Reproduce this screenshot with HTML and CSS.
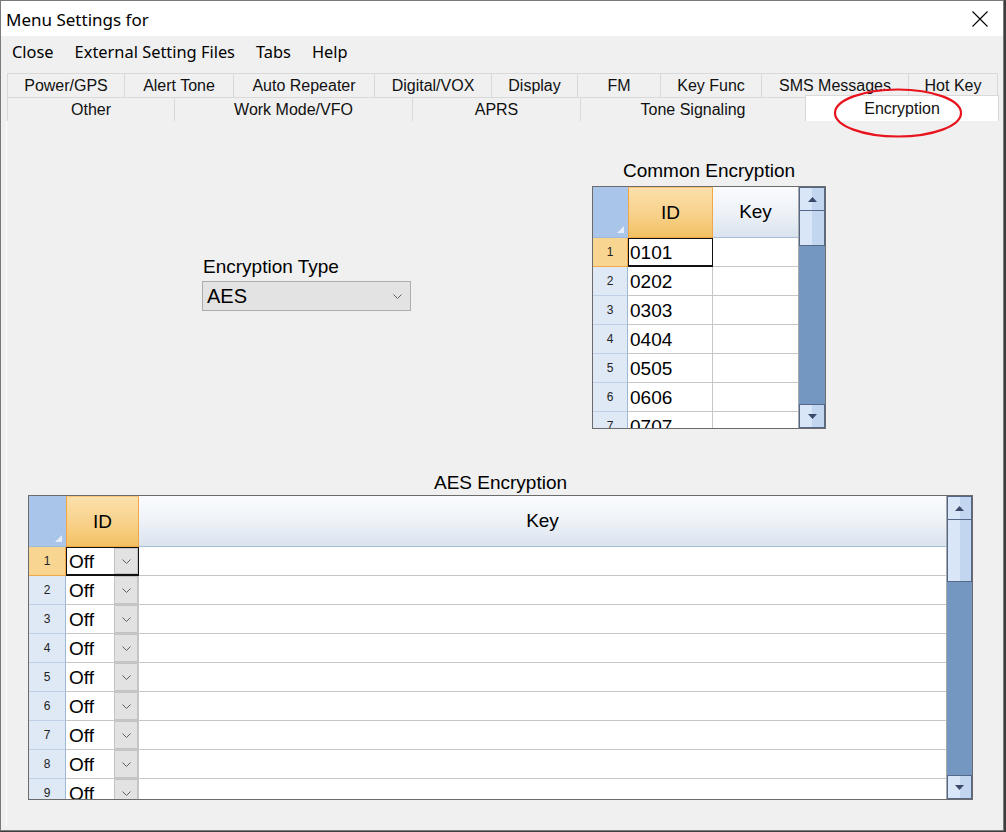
FILE: index.html
```html
<!DOCTYPE html>
<html>
<head>
<meta charset="utf-8">
<title>Menu Settings</title>
<link rel="stylesheet" href="styles.css">
</head>
<body>
<div class="window">
  <div class="titlebar">
    <span class="title">Menu Settings for</span>
    <svg class="close-x" width="16" height="16" viewBox="0 0 16 16"><path d="M0.5 0.5L15.5 15.5M15.5 0.5L0.5 15.5" stroke="#000" stroke-width="1.1" fill="none"/></svg>
  </div>
  <div class="menubar">
    <span>Close</span><span>External Setting Files</span><span>Tabs</span><span>Help</span>
  </div>
  <div class="tabctl">
    <div class="tabrow r1">
      <div class="tab">Power/GPS</div>
      <div class="tab">Alert Tone</div>
      <div class="tab">Auto Repeater</div>
      <div class="tab">Digital/VOX</div>
      <div class="tab">Display</div>
      <div class="tab">FM</div>
      <div class="tab">Key Func</div>
      <div class="tab">SMS Messages</div>
      <div class="tab">Hot Key</div>
    </div>
    <div class="tabrow r2">
      <div class="tab">Other</div>
      <div class="tab">Work Mode/VFO</div>
      <div class="tab">APRS</div>
      <div class="tab">Tone Signaling</div>
      <div class="tab sel">Encryption</div>
    </div>
    <svg class="mark" width="132" height="52" viewBox="0 0 132 52"><ellipse cx="65" cy="25" rx="63" ry="23.5" fill="none" stroke="#e8131d" stroke-width="2.2"/></svg>
    <div class="page">
      <div class="top">
        <div class="typeblk">
          <div class="lbl">Encryption Type</div>
          <div class="combo"><span>AES</span><svg width="9" height="5" viewBox="0 0 9 5"><path d="M0.5 0.5L4.5 4.5L8.5 0.5" stroke="#606060" fill="none"/></svg></div>
        </div>
        <div class="commonblk">
          <div class="lbl center">Common Encryption</div>
          <div class="grid common">
            <div class="gtable">
              <div class="ghead">
                <div class="c-rh h-corner"><span class="tri"></span></div>
                <div class="c-id h-id">ID</div>
                <div class="c-key h-key">Key</div>
              </div>
              <div class="grow"><div class="c-rh rh sel">1</div><div class="c-id cell cur">0101</div><div class="c-key cell"></div></div>
              <div class="grow"><div class="c-rh rh">2</div><div class="c-id cell">0202</div><div class="c-key cell"></div></div>
              <div class="grow"><div class="c-rh rh">3</div><div class="c-id cell">0303</div><div class="c-key cell"></div></div>
              <div class="grow"><div class="c-rh rh">4</div><div class="c-id cell">0404</div><div class="c-key cell"></div></div>
              <div class="grow"><div class="c-rh rh">5</div><div class="c-id cell">0505</div><div class="c-key cell"></div></div>
              <div class="grow"><div class="c-rh rh">6</div><div class="c-id cell">0606</div><div class="c-key cell"></div></div>
              <div class="grow"><div class="c-rh rh">7</div><div class="c-id cell">0707</div><div class="c-key cell"></div></div>
            </div>
            <div class="vscroll">
              <div class="sb-btn sb-up"><svg width="9" height="5" viewBox="0 0 9 5"><path d="M0 5L4.5 0L9 5Z" fill="#3b4869"/></svg></div>
              <div class="sb-btn sb-thumb"></div>
              <div class="sb-track"></div>
              <div class="sb-btn sb-down"><svg width="9" height="5" viewBox="0 0 9 5"><path d="M0 0L4.5 5L9 0Z" fill="#3b4869"/></svg></div>
            </div>
          </div>
        </div>
      </div>
      <div class="aesblk">
        <div class="lbl center">AES Encryption</div>
        <div class="grid aes">
          <div class="gtable">
            <div class="ghead">
              <div class="c-rh h-corner"><span class="tri"></span></div>
              <div class="c-id h-id">ID</div>
              <div class="c-key h-key">Key</div>
            </div>
            <div class="grow"><div class="c-rh rh sel">1</div><div class="c-id cell dd cur"><span class="ddv">Off</span><span class="ddbtn"><svg width="9" height="5" viewBox="0 0 9 5"><path d="M0.5 0.5L4.5 4.5L8.5 0.5" stroke="#606060" fill="none"/></svg></span></div><div class="c-key cell"></div></div>
            <div class="grow"><div class="c-rh rh">2</div><div class="c-id cell dd"><span class="ddv">Off</span><span class="ddbtn"><svg width="9" height="5" viewBox="0 0 9 5"><path d="M0.5 0.5L4.5 4.5L8.5 0.5" stroke="#606060" fill="none"/></svg></span></div><div class="c-key cell"></div></div>
            <div class="grow"><div class="c-rh rh">3</div><div class="c-id cell dd"><span class="ddv">Off</span><span class="ddbtn"><svg width="9" height="5" viewBox="0 0 9 5"><path d="M0.5 0.5L4.5 4.5L8.5 0.5" stroke="#606060" fill="none"/></svg></span></div><div class="c-key cell"></div></div>
            <div class="grow"><div class="c-rh rh">4</div><div class="c-id cell dd"><span class="ddv">Off</span><span class="ddbtn"><svg width="9" height="5" viewBox="0 0 9 5"><path d="M0.5 0.5L4.5 4.5L8.5 0.5" stroke="#606060" fill="none"/></svg></span></div><div class="c-key cell"></div></div>
            <div class="grow"><div class="c-rh rh">5</div><div class="c-id cell dd"><span class="ddv">Off</span><span class="ddbtn"><svg width="9" height="5" viewBox="0 0 9 5"><path d="M0.5 0.5L4.5 4.5L8.5 0.5" stroke="#606060" fill="none"/></svg></span></div><div class="c-key cell"></div></div>
            <div class="grow"><div class="c-rh rh">6</div><div class="c-id cell dd"><span class="ddv">Off</span><span class="ddbtn"><svg width="9" height="5" viewBox="0 0 9 5"><path d="M0.5 0.5L4.5 4.5L8.5 0.5" stroke="#606060" fill="none"/></svg></span></div><div class="c-key cell"></div></div>
            <div class="grow"><div class="c-rh rh">7</div><div class="c-id cell dd"><span class="ddv">Off</span><span class="ddbtn"><svg width="9" height="5" viewBox="0 0 9 5"><path d="M0.5 0.5L4.5 4.5L8.5 0.5" stroke="#606060" fill="none"/></svg></span></div><div class="c-key cell"></div></div>
            <div class="grow"><div class="c-rh rh">8</div><div class="c-id cell dd"><span class="ddv">Off</span><span class="ddbtn"><svg width="9" height="5" viewBox="0 0 9 5"><path d="M0.5 0.5L4.5 4.5L8.5 0.5" stroke="#606060" fill="none"/></svg></span></div><div class="c-key cell"></div></div>
            <div class="grow"><div class="c-rh rh">9</div><div class="c-id cell dd"><span class="ddv">Off</span><span class="ddbtn"><svg width="9" height="5" viewBox="0 0 9 5"><path d="M0.5 0.5L4.5 4.5L8.5 0.5" stroke="#606060" fill="none"/></svg></span></div><div class="c-key cell"></div></div>
          </div>
          <div class="vscroll">
            <div class="sb-btn sb-up"><svg width="9" height="5" viewBox="0 0 9 5"><path d="M0 5L4.5 0L9 5Z" fill="#3b4869"/></svg></div>
            <div class="sb-btn sb-thumb"></div>
            <div class="sb-track"></div>
            <div class="sb-btn sb-down"><svg width="9" height="5" viewBox="0 0 9 5"><path d="M0 0L4.5 5L9 0Z" fill="#3b4869"/></svg></div>
          </div>
        </div>
      </div>
    </div>
  </div>
</div>
</body>
</html>
```
FILE: styles.css
```css
* { box-sizing: border-box; }
html, body { margin: 0; padding: 0; }
body {
  background: #3e3e3e;
  width: 1006px;
  height: 832px;
  overflow: hidden;
  font-family: "Liberation Sans", Arial, sans-serif;
  color: #000;
}
.window {
  width: 1004px;
  height: 831px;
  border: 1px solid #7a7a7a;
  background: #f0f0f0;
  display: flex;
  flex-direction: column;
}
.titlebar {
  flex: none;
  height: 35px;
  background: #fff;
  display: flex;
  align-items: center;
  justify-content: space-between;
}
.title {
  font-family: "Noto Sans", "Open Sans", sans-serif;
  font-size: 17px;
  padding-left: 5px;
  padding-top: 2px;
}
.close-x { margin-right: 15px; }
.menubar {
  flex: none;
  height: 30px;
  display: flex;
  align-items: center;
  padding-left: 11px;
  gap: 21px;
  font-family: "Noto Sans", "Open Sans", sans-serif;
  font-size: 16.4px;
}
.tabctl {
  position: relative;
  flex: 1;
  padding-top: 7px;
}
.tabrow {
  display: flex;
  height: 24px;
  margin-left: 6px;
}
.tab {
  flex: none;
  height: 24px;
  border-left: 1px solid #d9d9d9;
  border-top: 1px solid #d9d9d9;
  font-size: 16px;
  color: #111;
  display: flex;
  align-items: center;
  justify-content: center;
  white-space: nowrap;
}
.r1 .tab:last-child { border-right: 1px solid #d9d9d9; }
.r1 .tab:nth-child(1) { width: 117px; }
.r1 .tab:nth-child(2) { width: 109px; }
.r1 .tab:nth-child(3) { width: 141px; }
.r1 .tab:nth-child(4) { width: 117px; }
.r1 .tab:nth-child(5) { width: 86px; }
.r1 .tab:nth-child(6) { width: 83px; }
.r1 .tab:nth-child(7) { width: 101px; }
.r1 .tab:nth-child(8) { width: 147px; }
.r1 .tab:nth-child(9) { width: 90px; }
.r2 .tab:nth-child(1) { width: 167px; }
.r2 .tab:nth-child(2) { width: 238px; }
.r2 .tab:nth-child(3) { width: 168px; }
.r2 .tab:nth-child(4) { width: 225px; }
.r2 .tab.sel {
  width: 194px;
  height: 26px;
  margin-top: -2px;
  background: #fff;
  border: 1px solid #d9d9d9;
  border-bottom: none;
}
.mark {
  position: absolute;
  left: 832px;
  top: 22px;
}
.page {
  height: 705px;
  margin-left: 5px;
  border-left: 1px solid #fcfcfc;
  padding-top: 39px;
}
.top {
  display: flex;
  height: 269px;
}
.lbl {
  font-size: 19px;
  line-height: 22px;
  height: 22px;
  white-space: nowrap;
}
.center { text-align: center; }
.typeblk {
  margin-left: 195px;
  margin-top: 96px;
  width: 209px;
}
.typeblk .lbl { padding-left: 1px; }
.combo {
  margin-top: 3px;
  height: 30px;
  border: 1px solid #adadad;
  background: #e3e3e3;
  display: flex;
  align-items: center;
  justify-content: space-between;
  padding: 0 8px 0 4px;
  font-size: 20px;
}
.commonblk {
  margin-left: 181px;
  width: 234px;
}
.aesblk {
  margin-left: 21px;
  margin-top: 43px;
  width: 945px;
}
/* grids */
.grid {
  border: 1px solid #6b6b6b;
  display: flex;
  background: #fff;
}
.common { margin-top: 4px; height: 243px; }
.aes { margin-top: 1px; height: 305px; }
.gtable {
  flex: 1;
  overflow: hidden;
  display: flex;
  flex-direction: column;
}
.ghead { display: flex; height: 51px; flex: none; }
.grow { display: flex; height: 29px; flex: none; }
.c-rh { flex: none; }
.c-id { flex: none; }
.c-key { flex: 1; }
.common .c-rh { width: 35px; }
.common .c-id { width: 85px; }
.aes .c-rh { width: 37px; }
.aes .c-id { width: 73px; }
.h-corner {
  background: #a9c5e9;
  position: relative;
  border-bottom: 1px solid #9fb9da;
}
.tri {
  position: absolute;
  right: 4px;
  bottom: 4px;
  width: 0;
  height: 0;
  border-left: 7px solid transparent;
  border-bottom: 7px solid #e6eef9;
}
.h-id {
  background: linear-gradient(#fbe0ab, #f8d28d 50%, #f2c164);
  border: 1px solid #f3a744;
  border-top-color: #f7c57c;
  font-size: 19px;
  display: flex;
  align-items: center;
  justify-content: center;
}
.h-key {
  background: linear-gradient(#fafcfe, #eef2f7 50%, #d9e3ee);
  border-bottom: 1px solid #a9bdd6;
  font-size: 19px;
  display: flex;
  align-items: center;
  justify-content: center;
}
.rh {
  background: #dfe9f6;
  border-right: 1px solid #9db7d7;
  border-bottom: 1px solid #bfcfe4;
  font-size: 12px;
  color: #222;
  display: flex;
  align-items: center;
  justify-content: center;
}
.rh.sel {
  background: #f9d592;
  border-right-color: #f1a845;
  border-bottom-color: #f1a845;
}
.cell {
  border-right: 1px solid #c6c6c6;
  border-bottom: 1px solid #c6c6c6;
  font-size: 19px;
  line-height: 28px;
  padding-left: 2px;
  padding-top: 1px;
  overflow: hidden;
  white-space: nowrap;
}
.c-key.cell { border-right: none; }
.cur {
  border-right-color: #111;
  border-bottom-color: #111;
  box-shadow: inset 1px 1px 0 #111, inset 0 -1px 0 #111;
}
.dd {
  display: flex;
  padding-left: 3px;
  padding-top: 0;
}
.ddv { flex: 1; padding-top: 1px; }
.ddbtn {
  flex: none;
  width: 24px;
  margin: 0;
  height: 28px;
  border: 1px solid #c3c3c3;
  background: #e2e2e2;
  display: flex;
  align-items: center;
  justify-content: center;
}
.dd.cur .ddbtn { height: 26px; margin-top: 1px; }
/* scrollbar */
.vscroll {
  flex: none;
  width: 27px;
  border-left: 1px solid #a8a8a8;
  background: #7397c1;
  display: flex;
  flex-direction: column;
}
.aes .vscroll { width: 26px; }
.sb-btn {
  flex: none;
  border: 1px solid #56688a;
  background: linear-gradient(to right, #d9e6f7 50%, #c3d6f0 50%);
  display: flex;
  align-items: center;
  justify-content: center;
}
.sb-up { height: 24px; }
.sb-thumb { height: 36px; margin-top: -1px; }
.aes .sb-thumb { height: 63px; }
.sb-track { flex: 1; }
.sb-down { height: 24px; }
```
